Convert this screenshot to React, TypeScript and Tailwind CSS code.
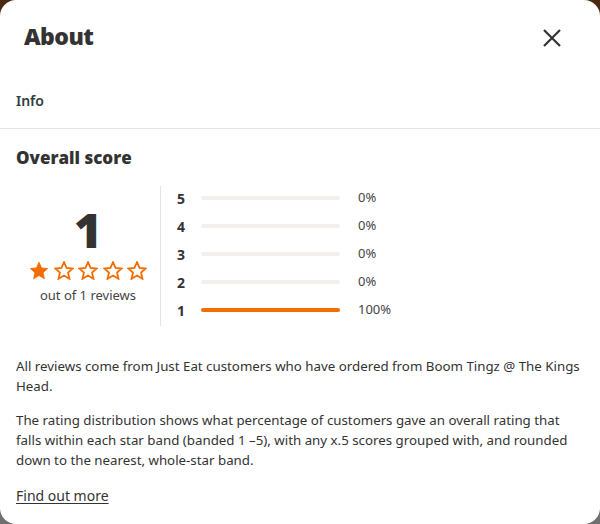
import React from 'react';

const rows = [
  { star: 5, pct: 0 },
  { star: 4, pct: 0 },
  { star: 3, pct: 0 },
  { star: 2, pct: 0 },
  { star: 1, pct: 100 },
];

function Star({ filled }: { filled: boolean }) {
  return (
    <svg width="20" height="19" viewBox="0 0 24 23" className="shrink-0">
      <path
        d="M12 1.5l3.1 6.9 7.4.7-5.6 5 1.7 7.4L12 17.6l-6.6 3.9 1.7-7.4-5.6-5 7.4-.7z"
        fill={filled ? '#f36d00' : '#fff'}
        stroke="#f36d00"
        strokeWidth={filled ? 1 : 2.2}
        strokeLinejoin="miter"
      />
    </svg>
  );
}

export default function App() {
  return (
    <div className="h-[524px] w-[600px] bg-gradient-to-b from-[#4a2a10] via-[#5a5a30] to-[#707070]">
      <div
        className="h-[524px] w-[600px] overflow-hidden rounded-[16px] bg-white text-[#333]"
        style={{ fontFamily: '"Noto Sans", sans-serif' }}
      >
        {/* Header */}
        <div className="flex h-[73px] items-center justify-between pl-6 pr-[38px]">
          <h1 className="text-[23px] font-black tracking-tight text-[#333]" style={{ fontFamily: '"Open Sans", sans-serif' }}>
            About
          </h1>
          <svg width="20" height="20" viewBox="0 0 20 20" className="mt-[3px]">
            <path d="M2 2L18 18M18 2L2 18" stroke="#333" strokeWidth="2.2" />
          </svg>
        </div>

        <div className="flex h-[55px] items-center px-4">
          <span className="text-[14px] font-semibold text-[#2f3d3d]">Info</span>
        </div>
        <div className="h-px bg-[#e4e4e4]" />

        <div className="px-4">
          <h2 className="mt-[17px] text-[17px] font-extrabold leading-[24px] text-[#333]" style={{ fontFamily: '"Open Sans", sans-serif' }}>
            Overall score
          </h2>

          {/* Score block */}
          <div className="mt-[16px] flex">
            <div className="flex w-[145px] flex-col items-center border-r border-[#e4e4e4] pt-[16px]">
              <div className="text-[48px] font-extrabold leading-[56px] text-[#333]" style={{ fontFamily: '"Open Sans", sans-serif' }}>
                1
              </div>
              <div className="mt-[3px] flex gap-[4.5px]">
                {[0, 1, 2, 3, 4].map((i) => (
                  <Star key={i} filled={i === 0} />
                ))}
              </div>
              <div className="mt-[6px] pb-[20px] text-[13px] text-[#444]">out of 1 reviews</div>
            </div>

            <div className="-mt-[2px] flex flex-col pl-[16px]">
              {rows.map((r) => (
                <div key={r.star} className="flex h-[28px] items-center">
                  <span className="w-[24px] text-[14px] font-bold text-[#333]" style={{ fontFamily: '"Open Sans", sans-serif' }}>
                    {r.star}
                  </span>
                  <div className="h-[4px] w-[139px] rounded-full bg-[#f3f0ec]">
                    <div className="h-[4px] rounded-full bg-[#f36d00]" style={{ width: `${r.pct}%` }} />
                  </div>
                  <span className="ml-[18px] text-[13px] text-[#444]">{r.pct}%</span>
                </div>
              ))}
            </div>
          </div>

          <p className="mt-[30px] text-[13.3px] leading-[20px] text-[#333]">
            All reviews come from Just Eat customers who have ordered from Boom Tingz @ The Kings Head.
          </p>
          <p className="mt-[14px] text-[13.3px] leading-[20px] text-[#333]">
            The rating distribution shows what percentage of customers gave an overall rating that falls within each
            star band (banded 1 –5), with any x.5 scores grouped with, and rounded down to the nearest, whole-star band.
          </p>
          <a className="mt-[15px] inline-block text-[14px] text-[#333] underline underline-offset-2">Find out more</a>
        </div>
      </div>
    </div>
  );
}
